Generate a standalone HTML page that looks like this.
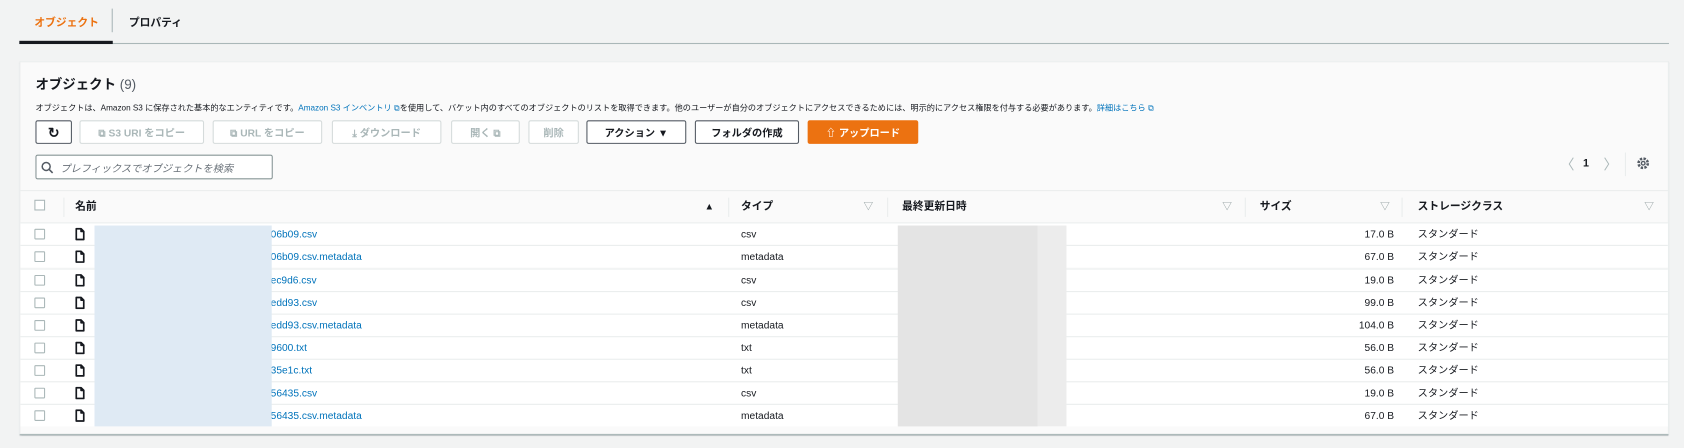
<!DOCTYPE html>
<html><head><meta charset="utf-8"><style>
*{box-sizing:border-box;margin:0;padding:0}
html,body{width:1684px;height:448px;overflow:hidden;background:#f2f3f3}
#w{width:1568px;height:417px;position:relative;transform:scale(1.07398);transform-origin:0 0;font-family:"Liberation Sans","Noto Sans CJK JP",sans-serif;color:#16191f;font-size:10px}
.a{position:absolute;white-space:nowrap}
.btn{position:absolute;top:112px;height:22px;border:1px solid #d5dbdb;background:#fff;border-radius:2px;font-size:9.5px;font-weight:bold;color:#aab7b8;text-align:center;line-height:22px;padding-top:1px;white-space:nowrap}
.btn.on{border-color:#545b64;color:#16191f}
.hd{position:absolute;top:178px;line-height:29px;font-size:10px;font-weight:bold}
.tri{position:absolute;top:178px;line-height:29px;font-size:9px;color:#879596}
.dv{position:absolute;top:184px;width:1px;height:18px;background:#eaeded}
.row{position:absolute;left:19px;width:1534px;height:21px;border-top:1px solid #eaeded;background:#fff}
.cb{position:absolute;left:13px;top:5px;width:10px;height:10px;border:1px solid #aab7b8;border-radius:1px;background:#fff}
.fi{position:absolute;left:51px;top:4px}
.row span{position:absolute;top:1px;line-height:20px;font-size:9.5px}
</style></head><body><div id="w">
<div class="a" style="left:32px;top:12px;font-size:10px;font-weight:bold;color:#ec7211">オブジェクト</div>
<div class="a" style="left:104px;top:8px;width:1px;height:22px;background:#aab7b8"></div>
<div class="a" style="left:120px;top:12px;font-size:10px;font-weight:bold;color:#16191f">プロパティ</div>
<div class="a" style="left:18px;top:40px;width:1536px;height:1px;background:#aab7b8"></div>
<div class="a" style="left:18px;top:38px;width:87px;height:3px;background:#16191f"></div>

<div class="a" style="left:18px;top:57px;width:1536px;height:348px;background:#fafafa;border:1px solid #eaeded;border-bottom:1px solid #aab7b8;box-shadow:0 1px 1px rgba(0,28,36,.3)"></div>
<div class="a" style="left:33px;top:68px;font-size:12.5px;font-weight:bold">オブジェクト <span style="font-weight:normal;color:#545b64">(9)</span></div>
<div class="a" style="left:33px;top:95px;font-size:7.6px;color:#16191f">オブジェクトは、Amazon S3 に保存された基本的なエンティティです。<span style="color:#0073bb">Amazon S3 インベントリ ⧉</span>を使用して、バケット内のすべてのオブジェクトのリストを取得できます。他のユーザーが自分のオブジェクトにアクセスできるためには、明示的にアクセス権限を付与する必要があります。<span style="color:#0073bb">詳細はこちら ⧉</span></div>

<div class="btn on" style="left:33px;width:34px;font-size:13px;padding-top:0">↻</div>
<div class="btn" style="left:74px;width:116px">⧉ S3 URI をコピー</div>
<div class="btn" style="left:198px;width:102px">⧉ URL をコピー</div>
<div class="btn" style="left:309px;width:102px">⤓ ダウンロード</div>
<div class="btn" style="left:420px;width:64px">開く ⧉</div>
<div class="btn" style="left:492px;width:47px">削除</div>
<div class="btn on" style="left:546px;width:93px">アクション ▼</div>
<div class="btn on" style="left:647px;width:97px">フォルダの作成</div>
<div class="btn" style="left:752px;width:103px;background:#ec7211;border-color:#ec7211;color:#fff">⇧ アップロード</div>

<div class="a" style="left:33px;top:144px;width:221px;height:23px;border:1px solid #879596;border-radius:2px;background:#fff"></div>
<svg class="a" style="left:38px;top:150px" width="12" height="12" viewBox="0 0 12 12"><circle cx="5" cy="5" r="3.7" fill="none" stroke="#545b64" stroke-width="1.4"/><path d="M7.7 7.7L11 11" stroke="#545b64" stroke-width="1.5"/></svg>
<div class="a" style="left:56px;top:146px;line-height:23px;font-size:9.5px;color:#687078;font-style:italic">プレフィックスでオブジェクトを検索</div>

<div class="a" style="left:1453px;top:143px;font-size:13px;color:#aab7b8">〈</div>
<div class="a" style="left:1474px;top:147px;font-size:10px;font-weight:bold">1</div>
<div class="a" style="left:1493px;top:143px;font-size:13px;color:#aab7b8">〉</div>
<div class="a" style="left:1513px;top:142px;width:1px;height:22px;background:#eaeded"></div>
<svg class="a" style="left:1524px;top:146px" width="12" height="12" viewBox="0 0 12 12"><circle cx="6" cy="6" r="4.3" fill="none" stroke="#545b64" stroke-width="2.4" stroke-dasharray="2.2 1.2"/><circle cx="6" cy="6" r="1.7" fill="none" stroke="#545b64" stroke-width="1.3"/></svg>

<div class="a" style="left:19px;top:177px;width:1534px;height:1px;background:#eaeded"></div>
<div class="a" style="left:32px;top:186px;width:10px;height:10px;border:1px solid #aab7b8;background:#fff"></div>
<div class="dv" style="left:59px"></div>
<div class="hd" style="left:70px">名前</div>
<div class="a" style="left:656px;top:178px;line-height:29px;font-size:9px">▲</div>
<div class="dv" style="left:678px"></div>
<div class="hd" style="left:690px">タイプ</div><div class="tri" style="left:804px">▽</div>
<div class="dv" style="left:826px"></div>
<div class="hd" style="left:840px">最終更新日時</div><div class="tri" style="left:1138px">▽</div>
<div class="dv" style="left:1159px"></div>
<div class="hd" style="left:1173px">サイズ</div><div class="tri" style="left:1285px">▽</div>
<div class="dv" style="left:1305px"></div>
<div class="hd" style="left:1320px">ストレージクラス</div><div class="tri" style="left:1531px">▽</div>

<svg width="0" height="0" style="position:absolute"><defs><symbol id="f" viewBox="0 0 9 12"><path d="M1 1H5.5L8 3.5V11H1Z M5.5 1V3.5H8" fill="none" stroke="#16191f" stroke-width="1.6" stroke-linejoin="round"/></symbol></defs></svg>

<div class="row" style="top:207px"><div class="cb"></div><svg class="fi" width="9" height="12"><use href="#f"/></svg><span style="left:233px;color:#0073bb">06b09.csv</span><span style="left:671px">csv</span><span style="left:1230px;width:49px;text-align:right">17.0 B</span><span style="left:1301px">スタンダード</span></div>
<div class="row" style="top:228px"><div class="cb"></div><svg class="fi" width="9" height="12"><use href="#f"/></svg><span style="left:233px;color:#0073bb">06b09.csv.metadata</span><span style="left:671px">metadata</span><span style="left:1230px;width:49px;text-align:right">67.0 B</span><span style="left:1301px">スタンダード</span></div>
<div class="row" style="top:250px"><div class="cb"></div><svg class="fi" width="9" height="12"><use href="#f"/></svg><span style="left:233px;color:#0073bb">ec9d6.csv</span><span style="left:671px">csv</span><span style="left:1230px;width:49px;text-align:right">19.0 B</span><span style="left:1301px">スタンダード</span></div>
<div class="row" style="top:271px"><div class="cb"></div><svg class="fi" width="9" height="12"><use href="#f"/></svg><span style="left:233px;color:#0073bb">edd93.csv</span><span style="left:671px">csv</span><span style="left:1230px;width:49px;text-align:right">99.0 B</span><span style="left:1301px">スタンダード</span></div>
<div class="row" style="top:292px"><div class="cb"></div><svg class="fi" width="9" height="12"><use href="#f"/></svg><span style="left:233px;color:#0073bb">edd93.csv.metadata</span><span style="left:671px">metadata</span><span style="left:1230px;width:49px;text-align:right">104.0 B</span><span style="left:1301px">スタンダード</span></div>
<div class="row" style="top:313px"><div class="cb"></div><svg class="fi" width="9" height="12"><use href="#f"/></svg><span style="left:233px;color:#0073bb">9600.txt</span><span style="left:671px">txt</span><span style="left:1230px;width:49px;text-align:right">56.0 B</span><span style="left:1301px">スタンダード</span></div>
<div class="row" style="top:334px"><div class="cb"></div><svg class="fi" width="9" height="12"><use href="#f"/></svg><span style="left:233px;color:#0073bb">35e1c.txt</span><span style="left:671px">txt</span><span style="left:1230px;width:49px;text-align:right">56.0 B</span><span style="left:1301px">スタンダード</span></div>
<div class="row" style="top:355px"><div class="cb"></div><svg class="fi" width="9" height="12"><use href="#f"/></svg><span style="left:233px;color:#0073bb">56435.csv</span><span style="left:671px">csv</span><span style="left:1230px;width:49px;text-align:right">19.0 B</span><span style="left:1301px">スタンダード</span></div>
<div class="row" style="top:376px"><div class="cb"></div><svg class="fi" width="9" height="12"><use href="#f"/></svg><span style="left:233px;color:#0073bb">56435.csv.metadata</span><span style="left:671px">metadata</span><span style="left:1230px;width:49px;text-align:right">67.0 B</span><span style="left:1301px">スタンダード</span></div>

<div class="a" style="left:88px;top:210px;width:165px;height:187px;background:#dfeaf4"></div>
<div class="a" style="left:836px;top:210px;width:157px;height:187px;background:#ececec"></div>
<div class="a" style="left:836px;top:210px;width:130px;height:187px;background:#e4e4e4"></div>
</div></body></html>
